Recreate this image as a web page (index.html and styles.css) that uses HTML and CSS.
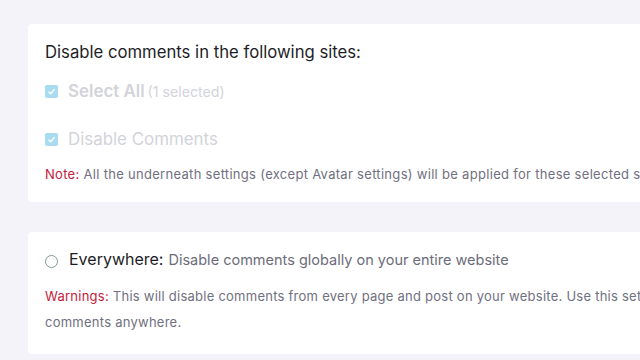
FILE: index.html
```html
<!DOCTYPE html>
<html lang="en">
<head>
    <meta charset="UTF-8">
    <title>Disable Comments</title>
    <link rel="stylesheet" href="styles.css">
</head>
<body>
    <main class="page">
        <section class="card sites-card">
            <h2 class="card-title">Disable comments in the following sites:</h2>
            <label class="check-row check-all">
                <span class="checkbox"><svg viewBox="0 0 12 12" width="9" height="9"><path d="M2 6.2 L4.8 9 L10 3" fill="none" stroke="#fff" stroke-width="1.6"/></svg></span>
                <span class="check-label bold">Select All</span>
                <span class="count">(1 selected)</span>
            </label>
            <label class="check-row">
                <span class="checkbox"><svg viewBox="0 0 12 12" width="9" height="9"><path d="M2 6.2 L4.8 9 L10 3" fill="none" stroke="#fff" stroke-width="1.6"/></svg></span>
                <span class="check-label">Disable Comments</span>
            </label>
            <p class="note"><span class="red">Note:</span> All the underneath settings (except Avatar settings) will be applied for these selected sites.</p>
        </section>

        <section class="card mode-card">
            <label class="radio-row">
                <span class="radio"></span>
                <span class="radio-title">Everywhere:</span>
                <span class="radio-desc">Disable comments globally on your entire website</span>
            </label>
            <p class="note warning"><span class="red">Warnings:</span> This will disable comments from every page and post on your website. Use this setting if you do not want to show<br>comments anywhere.</p>
        </section>
    </main>
</body>
</html>
```

FILE: styles.css
```css
body {
    margin: 0;
    padding: 0;
    background-color: #f3f3f9;
    font-family: "Inter", "Noto Sans", sans-serif;
    overflow: hidden;
}

.page {
    padding: 24px 0 0 28px;
    width: 900px;
}

.card {
    background-color: #ffffff;
    border-radius: 4px;
    padding: 0 0 0 17px;
}

.sites-card {
    height: 178px;
    padding-top: 16px;
    box-sizing: border-box;
}

.card-title {
    margin: 0;
    font-size: 16.7px;
    font-weight: 400;
    color: #1d1d27;
    line-height: 24px;
}

.check-row {
    display: flex;
    align-items: center;
    gap: 10px;
    height: 24px;
    margin-top: 15px;
    color: #d3d3da;
    font-size: 16.9px;
}

.check-row + .check-row {
    margin-top: 24px;
}

.checkbox {
    width: 13px;
    height: 13px;
    background-color: #a9dcf0;
    border-radius: 2px;
    display: flex;
    align-items: center;
    justify-content: center;
}

.check-label.bold {
    font-weight: 600;
}

.count {
    font-size: 14.2px;
    margin-left: -7px;
}

.note {
    margin: 10px 0 0;
    font-size: 13px;
    letter-spacing: 0.3px;
    line-height: 26px;
    color: #707080;
    white-space: nowrap;
}

.red {
    color: #c4203a;
}

.mode-card {
    margin-top: 30px;
    height: 122px;
    padding-top: 17px;
    box-sizing: border-box;
}

.radio-row {
    display: flex;
    align-items: baseline;
    height: 24px;
}

.radio {
    width: 11px;
    height: 11px;
    border: 1px solid #7f9a8f;
    border-radius: 50%;
    margin-right: 11px;
    align-self: center;
}

.radio-title {
    font-size: 16px;
    color: #1d1d27;
    margin-right: 5px;
}

.radio-desc {
    font-size: 14.5px;
    color: #6c6c7a;
}

.warning {
    margin-top: 10px;
    letter-spacing: 0.25px;
}
```
